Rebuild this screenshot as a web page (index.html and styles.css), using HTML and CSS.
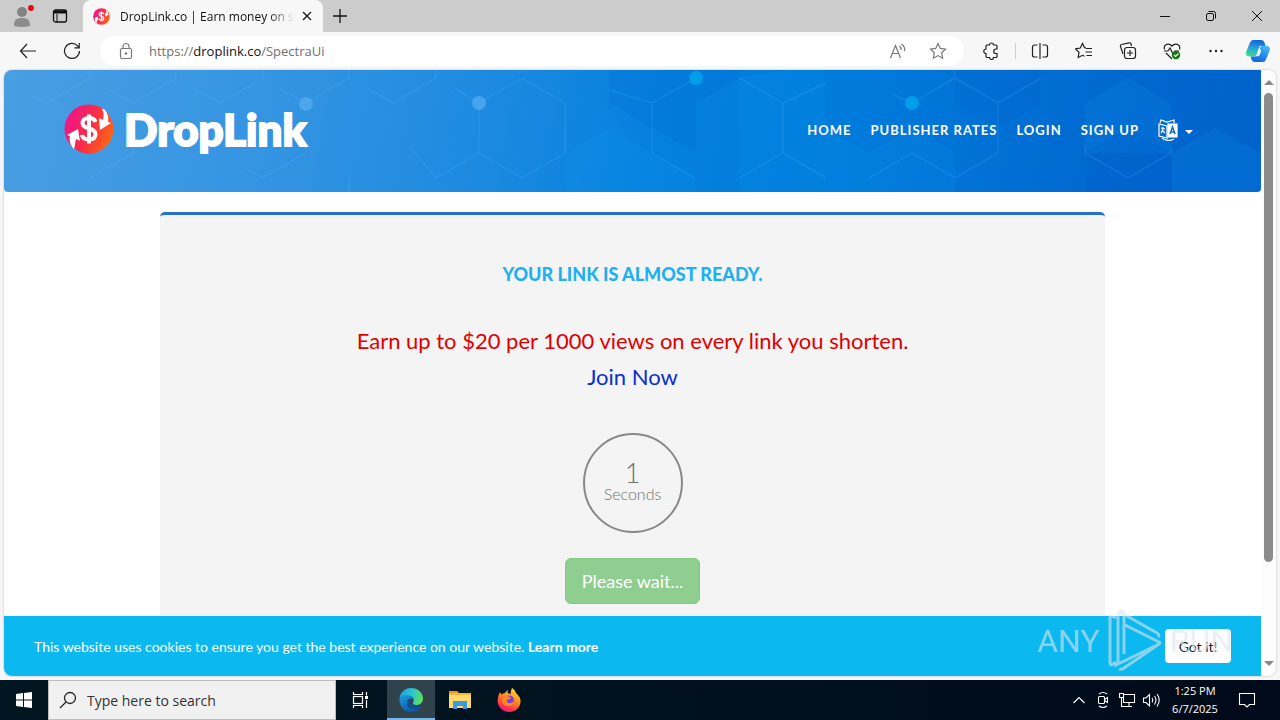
FILE: index.html
```html
<!DOCTYPE html>
<html lang="en">
<head>
  <meta charset="UTF-8" />
  <meta name="viewport" content="width=device-width, initial-scale=1.0" />
  <title>DropLink.co | Earn money on short links</title>
  <link rel="stylesheet" href="styles.css">
</head>
<body>
  <!-- shared logo symbol -->
  <svg class="defs" width="0" height="0" aria-hidden="true">
    <defs>
      <linearGradient id="drop" x1="0" y1="0.3" x2="1" y2="0.7">
        <stop offset="0" stop-color="#f0148c" />
        <stop offset="0.5" stop-color="#fa2c48" />
        <stop offset="1" stop-color="#ff6a10" />
      </linearGradient>
    </defs>
    <symbol id="coin" viewBox="0 0 50 50">
      <circle cx="25" cy="25" r="24.5" fill="url(#drop)" />
      <path d="M31.500 18c-1-3-3.500-4-6.500-4-4 0-6.500 2-6.500 5 0 7 13 4 13 11 0 4-3 5.500-6.500 5.500-4 0-6.500-1.500-7-4.500M25 10.500v29" fill="none" stroke="#fff" stroke-width="4" />
      <path d="M40 5c4 4 5 9 4 13l3 1-11 7-1-12 4 2c1-4 1-7-1-11z" fill="#fff" />
      <path d="M10 45c-4-4-5-9-4-13l-3-1 11-6 2 12-4-2c-1 4-1 7-2 10z" fill="#fff" />
    </symbol>
  </svg>

  <div class="titlebar">
    <button class="tb-btn profile" aria-label="Profile">
      <svg width="24" height="24" viewBox="0 0 24 24"><circle cx="12" cy="8" r="5" fill="#828282" /><path d="M4 22c0-6 2-8 8-8s8 2 8 8q-8 2-16 0z" fill="#8c8c8c" /><circle cx="21" cy="4" r="3" fill="#e00b1c" /></svg>
    </button>
    <button class="tb-btn workspaces" aria-label="Tab actions">
      <svg width="16" height="16" viewBox="0 0 16 16"><rect x="1.500" y="2" width="13" height="12" rx="2" fill="none" stroke="#111" stroke-width="1.300" /><path d="M2 3h12v2H2zM5 6v8" fill="#111" stroke="#111" /></svg>
    </button>
    <div class="tab">
      <svg width="17" height="17"><use href="#coin" /></svg>
      <span class="tab-title">DropLink.co | Earn money on short links</span>
      <button class="tab-close" aria-label="Close tab">
        <svg width="10" height="10" viewBox="0 0 10 10"><path d="M1 1l8 8M9 1l-8 8" stroke="#111" stroke-width="1.200" /></svg>
      </button>
    </div>
    <button class="tb-btn new-tab" aria-label="New tab">
      <svg width="14" height="14" viewBox="0 0 14 14"><path d="M7 0v14M0 7h14" stroke="#111" stroke-width="1.300" /></svg>
    </button>
    <div class="window-controls">
      <button aria-label="Minimize"><svg width="10" height="10" viewBox="0 0 10 10"><path d="M0 5.500h10" stroke="#111" /></svg></button>
      <button aria-label="Restore"><svg width="10" height="10" viewBox="0 0 10 10"><rect x="0.500" y="2.500" width="7" height="7" rx="1.500" fill="none" stroke="#111" /><path d="M2.500 0.500h5a2 2 0 0 1 2 2v5" fill="none" stroke="#111" /></svg></button>
      <button aria-label="Close"><svg width="10" height="10" viewBox="0 0 10 10"><path d="M0 0l10 10M10 0L0 10" stroke="#111" /></svg></button>
    </div>
  </div>

  <div class="toolbar">
    <button aria-label="Back"><svg width="18" height="18" viewBox="0 0 18 18"><path d="M17 9H2M8 2L1.500 9 8 16" /></svg></button>
    <button aria-label="Refresh"><svg width="18" height="18" viewBox="0 0 18 18"><path d="M16.500 9a7.500 7.500 0 1 1-2-5.200L16 5.500M16.200 1v4.800h-4.800" /></svg></button>
    <div class="address">
      <svg width="16" height="18" viewBox="0 0 16 18"><rect x="2.500" y="6.500" width="11" height="10" rx="1.500" /><path d="M5 6.500V4.500a3 3 0 0 1 6 0v2" /><circle cx="8" cy="11.500" r="0.700" /></svg>
      <div class="url">https://<b>droplink.co</b>/SpectraUi</div>
      <button aria-label="Read aloud"><svg width="18" height="18" viewBox="0 0 18 18"><path d="M1.500 16L6.500 3.500 11.500 16M3.500 11.500h6M10.500 4q2 1.500 1.500 4M12.500 2q4 3 3 7" /></svg></button>
      <button aria-label="Add to favorites"><svg width="18" height="18" viewBox="0 0 18 18"><path d="M9 1.500l2.300 4.900 5.200.7-3.800 3.700.9 5.400L9 13.600l-4.600 2.600.9-5.400L1.500 7.100l5.200-.7z" /></svg></button>
    </div>
    <button aria-label="Extensions"><svg width="18" height="18" viewBox="0 0 18 18"><path d="M5 3h2.500a2 2 0 0 1 4 0h2.500q1 0 1 1v3h-1a2 2 0 0 0 0 4.500h1v3q0 1-1 1h-2.500a2 2 0 0 1-4 0H5q-1 0-1-1v-3a2.200 2.200 0 0 1 0-4.500V4q0-1 1-1z" /></svg></button>
    <span class="divider"></span>
    <button aria-label="Split screen"><svg width="18" height="18" viewBox="0 0 18 18"><path d="M6.500 3h-3a2 2 0 0 0-2 2v8a2 2 0 0 0 2 2h3M11.500 3h3a2 2 0 0 1 2 2v8a2 2 0 0 1-2 2h-3M9 1v16" /></svg></button>
    <button aria-label="Favorites"><svg width="18" height="18" viewBox="0 0 18 18"><path d="M11 6L9.500 5.700 7.500 1.500 5.300 6l-4.800.8L4 10.300 3.200 15.500l4.300-2.200 2 1M11 6.500h6M10.500 10h6.500M11.500 13.500H17" /></svg></button>
    <button aria-label="Collections"><svg width="18" height="18" viewBox="0 0 18 18"><path d="M4 12L1.500 4.500q-.5-1.500 1-2L10 .800q1.500-.300 2 1L12.500 4" /><rect x="5.500" y="5.500" width="11" height="11" rx="2.500" /><path d="M11 8v6M8 11h6" /></svg></button>
    <button aria-label="Browser essentials"><svg width="18" height="18" viewBox="0 0 18 18"><path d="M1.500 7.500C0 2 6 .500 9 4c3-3.500 9-2 7.500 3.500M3 11l6 6M1 9h4l2-3 3 6 2-3h4" /><circle cx="13" cy="13" r="4.200" class="ok" /><path d="M11 13l1.500 1.500 3-3" class="tick" /></svg></button>
    <button aria-label="Settings and more"><svg width="18" height="18" viewBox="0 0 18 18"><g class="dots"><circle cx="3.500" cy="9" r="1.200" /><circle cx="9" cy="9" r="1.200" /><circle cx="14.500" cy="9" r="1.200" /></g></svg></button>
    <button class="copilot" aria-label="Copilot">
      <svg width="24" height="24" viewBox="0 0 24 24">
        <defs>
          <linearGradient id="cpA" x1="0.500" y1="0" x2="0.300" y2="1"><stop offset="0" stop-color="#1565d8" /><stop offset="0.500" stop-color="#2aa4dc" /><stop offset="1" stop-color="#3ddc84" /></linearGradient>
          <linearGradient id="cpB" x1="0.700" y1="0" x2="0.300" y2="1"><stop offset="0" stop-color="#42b8f5" /><stop offset="1" stop-color="#1463df" /></linearGradient>
        </defs>
        <path d="M7 1h8q3 0 4 4l.500 2h-4q-2 0-3 3l-1.500 5q-1 2.500-4 2.500H3Q-1 17 .500 12L4 3.500Q5 1 7 1z" fill="url(#cpA)" />
        <path d="M17 23H9q-3 0-4-4l-.300-1.500H8q2 0 3-3L12.500 10q1-3 4-3H21q4 .500 2.500 5L20 20.500Q19 23 17 23z" fill="url(#cpB)" />
        <path d="M13 7h3q-2.500 0-3.500 3L11 14.500q-1 3-3 3 3 0 5.500-1L15 12z" fill="#eef8ff" />
      </svg>
    </button>
  </div>

  <div class="view">
    <div class="page">
      <header>
        <svg class="hexes" viewBox="0 0 1257 122" preserveAspectRatio="xMidYMid slice" aria-hidden="true">
          <g class="fills">
            <path d="M735 8l43-8h43v58l44 25v39H735z" />
            <path d="M865 83l43-25 43 25v39h-86z" />
            <path d="M1081 33l43-25 43 25v50l-86 0z" />
            <path d="M1168 83l43-25 46 25v39h-89z" />
            <path d="M562 83l43-25 87 50v14H562z" />
          </g>
          <g class="shades">
            <path d="M605 0h130v8l-43 25v50l-87-50z" />
            <path d="M951 0h86v33l-43 25-43-25z" />
            <path d="M1081 83l43-25 43 25v39h-86z" />
          </g>
          <g class="lines">
            <path d="M86 0v8L43 33 28 26M172 0v8l-43 25-25-14M259 0v8l-43 25-25-14M345 0v8l-43 25-26-14M302 76v7l-43 25-18-10M432 0v8l-43 25-25-14" />
            <path d="M129 76v7L86 108M345 108v14M405 76l27 32v0M432 108l43-25V33l43-25 43 25v50l-43 25-43-25M475 33L450 18" />
            <path d="M605 20l43 13 44-25M648 33v50l43 25M735 8l44 25 43-20M779 33v50l-44 25M779 83l43 25" />
            <path d="M888 24l20 9 43-25V0M951 8l43 25 43-25M994 33v50l-43 25-43-25M908 83l-43 25M1167 76v7l-43 25-43-25 0-7" />
          </g>
          <circle cx="302" cy="34" r="7" class="dot pale" />
          <circle cx="475" cy="33" r="7" class="dot pale" />
          <circle cx="692" cy="8" r="7" class="dot" />
          <circle cx="908" cy="33" r="7" class="dot" />
        </svg>
        <a class="brand" href="#">
          <svg width="50" height="50" aria-hidden="true"><use href="#coin" /></svg>
          <span>DropLink</span>
        </a>
        <nav>
          <a href="#">Home</a>
          <a href="#">Publisher Rates</a>
          <a href="#">Login</a>
          <a href="#">Sign Up</a>
          <a class="lang" href="#" aria-label="Language">
            <svg width="20" height="22" viewBox="0 0 20 22" fill="none" stroke="#fff" stroke-width="1.200">
              <path d="M1 5l8 2v12l-8-2zM2 4l1-3 6 2 7-2v3" />
              <path d="M10 5h9v13h-9z" fill="#fff" />
              <path d="M3 9l4 1M5 8c0 4-1 5-2 6M4 11l3 3M4 19c3 3 9 3 12 1" />
              <path d="M12 15l2.500-7 2.500 7M13 13h3" stroke="#0a6fd0" stroke-width="1.500" />
            </svg>
            <i class="caret"></i>
          </a>
        </nav>
      </header>

      <main>
        <h1>Your link is almost ready.</h1>
        <p class="promo">Earn up to $20 per 1000 views on every link you shorten.<br><a href="#">Join Now</a></p>
        <div class="timer"><span class="count">1</span><span>Seconds</span></div>
        <button class="wait">Please wait...</button>
      </main>

      <div class="cookies">
        <p>This website uses cookies to ensure you get the best experience on our website. <a href="#">Learn more</a></p>
        <button>Got it!</button>
      </div>

      <div class="watermark" aria-hidden="true">
        <span>ANY</span>
        <svg width="58" height="66" viewBox="0 0 58 66">
          <path d="M10 10L6 8Q4 7 4 9v46q0 3 3 1l3-2M18 46V6q0-4-4-2-2 1-2 4v47M14 4l37 21q3 2 1 4M19 17l34 17q2 1 0 2L8 58M53 36L18 60q-3 2-5 1" />
        </svg>
        <span>RUN</span>
      </div>
    </div>
    <div class="scrollbar">
      <i class="arrow up"></i>
      <i class="thumb"></i>
      <i class="arrow down"></i>
    </div>
  </div>

  <div class="taskbar">
    <button class="start" aria-label="Start">
      <svg width="16" height="16" viewBox="0 0 16 16" fill="#fff"><path d="M0 2l7-1v6.500H0zM8 .900L16 0v7.500H8zM0 8.500h7V15l-7-1zM8 8.500h8V16l-8-1z" /></svg>
    </button>
    <label class="search">
      <svg width="18" height="18" viewBox="0 0 18 18" fill="none" stroke="#222" stroke-width="1.300"><circle cx="11" cy="7" r="5.500" /><path d="M7 11l-6 6" /></svg>
      <input type="text" placeholder="Type here to search" aria-label="Search" />
    </label>
    <button class="task-view" aria-label="Task view">
      <svg width="18" height="18" viewBox="0 0 18 18" fill="none" stroke="#fff" stroke-width="1.200"><rect x="2.500" y="5.500" width="9" height="7" /><path d="M2.500 1v2.500h9V1M2.500 17v-2.500h9V17M15.500 1v3.500M15.500 9v8" /><path d="M14 5h3v3h-3z" fill="#fff" stroke="none" /></svg>
    </button>
    <div class="apps">
      <button class="active" aria-label="Edge">
        <svg width="24" height="24" viewBox="0 0 24 24">
          <defs>
            <linearGradient id="edA" x1="0" y1="0.300" x2="1" y2="0.500"><stop offset="0" stop-color="#1f9fe0" /><stop offset="0.500" stop-color="#2cc3d2" /><stop offset="1" stop-color="#5be05a" /></linearGradient>
            <linearGradient id="edB" x1="0" y1="0" x2="0.500" y2="1"><stop offset="0" stop-color="#1b9de2" /><stop offset="1" stop-color="#0c59a4" /></linearGradient>
          </defs>
          <path d="M.500 11C1 4 6 0 12 0c7 0 12 5 12 10.500 0 4-3 6.500-6.500 6.500-3 0-4-1.500-3.500-2.500 2-3 0-6.500-4-6.500C6 7 2 8 .500 11z" fill="url(#edA)" />
          <path d="M.500 11C2 8 5 6.500 8.500 7c3 .300 5 2 5.500 4-4-1-6 1-6 4 0 5 6 8 13.500 4.500C19 23 15.500 24 12 24 5 24 0 18 .500 11z" fill="url(#edB)" />
          <path d="M8 15c0-2 1-4 3-4.500-1 6 5 9 11 7l-.500 2C15 23 8 20 8 15z" fill="#134e94" />
        </svg>
      </button>
      <button aria-label="File Explorer">
        <svg width="22" height="20" viewBox="0 0 22 20"><path d="M0 1h8l2 2h12v15H0z" fill="#f5b53a" /><path d="M0 5h22v13H0z" fill="#ffd96a" /><path d="M4 19v-8h14v8h-4v-3H8v3z" fill="#3c9ae0" /><path d="M0 1h8v2H0z" fill="#e89c1e" /></svg>
      </button>
      <button aria-label="Firefox">
        <svg width="24" height="24" viewBox="0 0 24 24">
          <defs>
            <linearGradient id="fxA" x1="0.800" y1="0" x2="0.300" y2="1"><stop offset="0" stop-color="#ffe52e" /><stop offset="0.450" stop-color="#ff8a1f" /><stop offset="0.800" stop-color="#ff3550" /><stop offset="1" stop-color="#e31587" /></linearGradient>
          </defs>
          <path d="M3 4l1.500 2.500Q6 5 8 5q1-2 3-3l-.500 3 3 1Q14 2 15 0q3 1.500 4 5l1.500 1.500Q24 10 23.500 14C23 20 18 24 12 24S1 19.500.500 13Q.500 8 3 4z" fill="url(#fxA)" />
          <circle cx="12.500" cy="12" r="4.500" fill="#7b3fe0" />
          <path d="M6 9q3-2 7 0l1 1q-1 1-3 1.500-2 .500-1 2.500 2 2 4 1 2-1 3-.500-2 4-6 3.500-5 0-6-5z" fill="#ff8b22" />
        </svg>
      </button>
    </div>
    <div class="tray">
      <button aria-label="Show hidden icons"><svg width="18" height="18" viewBox="0 0 18 18"><path d="M3.500 12L9 6.500l5.500 5.500" /></svg></button>
      <button aria-label="Meet Now"><svg width="18" height="18" viewBox="0 0 18 18"><rect x="4.500" y="5.500" width="6" height="7" rx="1" /><path d="M10.500 8.500l3-2v5l-3-2M5 3q4-3 8 0M5 15q4 3 8 0" /></svg></button>
      <button aria-label="Network"><svg width="18" height="18" viewBox="0 0 18 18"><path d="M5.500 3.500h11v8h-11zM11 11.500v4M7 15.500h7M1.500 2.500h4v4h-4zM3.500 6.500v9H7" /></svg></button>
      <button aria-label="Volume"><svg width="18" height="18" viewBox="0 0 18 18"><path d="M1.500 7v4.500H4l3.500 3.500V3.500L4 7zM10 7q1.500 2 0 4.500M12.500 5q3 4 0 8.500M15 3q4.500 6 0 12.500" /></svg></button>
      <div class="clock"><span>1:25 PM</span><span>6/7/2025</span></div>
      <button class="notify" aria-label="Notifications"><svg width="18" height="18" viewBox="0 0 18 18"><path d="M1.500 2.500h15v11h-5L9 16l-2.500-2.500h-5z" /></svg></button>
    </div>
  </div>
</body>
</html>
```
FILE: styles.css
```css
* {
  box-sizing: border-box;
}
body {
  margin: 0;
  height: 100vh;
  display: flex;
  flex-direction: column;
  overflow: hidden;
  background: #f7f5f5;
  font-family: 'Open Sans', 'Noto Sans', sans-serif;
  color: #111;
}
button {
  display: flex;
  align-items: center;
  justify-content: center;
  padding: 0;
  border: none;
  background: none;
  color: inherit;
  font: inherit;
}
a {
  color: inherit;
  text-decoration: none;
}
p {
  margin: 0;
}
.defs {
  position: absolute;
}

/* browser tabs */
.titlebar {
  display: flex;
  flex: none;
  height: 32px;
  background: #cccccc;
}
.profile {
  width: 44px;
}
.workspaces {
  width: 32px;
  margin-right: 7px;
}
.tab {
  display: flex;
  align-items: center;
  width: 240px;
  padding: 0 8px 0 10px;
  gap: 10px;
  background: #f7f7f7;
  border-radius: 8px 8px 0 0;
}
.tab svg {
  flex: none;
}
.tab-title {
  flex: 1;
  margin-right: -6px;
  overflow: hidden;
  white-space: nowrap;
  font-size: 12px;
  mask-image: linear-gradient(to right, #000 85%, transparent);
}
.tab-close {
  width: 16px;
  height: 16px;
}
.new-tab {
  width: 34px;
}
.window-controls {
  display: flex;
  margin-left: auto;
}
.window-controls button {
  width: 46px;
}

/* address bar */
.toolbar {
  display: flex;
  flex: none;
  align-items: center;
  height: 38px;
  padding: 0 2px 0 6px;
  background: #f7f7f7;
}
.toolbar button {
  width: 44px;
  height: 30px;
}
.toolbar svg {
  fill: none;
  stroke: #222;
  stroke-width: 1.2;
}
.toolbar .copilot {
  width: 40px;
}
.toolbar .copilot svg {
  stroke: none;
}
.toolbar .ok {
  fill: #107c10;
  stroke: none;
}
.toolbar .tick {
  stroke: #fff;
}
.toolbar .dots {
  fill: #222;
  stroke: none;
}
.toolbar .address {
  display: flex;
  flex: 1;
  align-items: center;
  height: 30px;
  margin: 0 5px 0 6px;
  padding: 0 6px 0 18px;
  background: #fff;
  border-radius: 15px;
}
.toolbar .address svg {
  stroke: #777;
}
.toolbar .address button {
  width: 40px;
}
.url {
  flex: 1;
  margin-left: 15px;
  font-size: 13px;
  color: #707070;
}
.url b {
  font-weight: normal;
  color: #111;
}
.divider {
  width: 1px;
  height: 16px;
  margin: 0 2px;
  background: #cfcfcf;
}

/* web page */
.view {
  display: flex;
  flex: 1;
  min-height: 0;
  margin: 0 4px 4px;
  overflow: hidden;
  background: #fff;
  border-radius: 8px;
  box-shadow: 0 0 2px #aaa;
}
.page {
  position: relative;
  flex: 1;
  overflow: hidden;
  font-family: Lato, sans-serif;
}
header {
  position: relative;
  display: flex;
  align-items: center;
  justify-content: space-between;
  height: 122px;
  padding: 0 68px 4px 60px;
  background: linear-gradient(100deg, #4a9ee2 0%, #3394e2 22%, #1d8ae0 38%, #0480de 52%, #007adb 68%, #0068d0 88%, #0062cb 100%);
  border-radius: 0 0 4px 4px;
  color: #fff;
}
.hexes {
  position: absolute;
  inset: 0;
  width: 100%;
  height: 100%;
}
.fills {
  fill: #14a0f0;
  opacity: 0.12;
}
.shades {
  fill: #0050c0;
  opacity: 0.1;
}
.lines {
  fill: none;
  stroke: #6fc4ff;
  stroke-width: 1.5;
  opacity: 0.15;
}
.dot {
  fill: #00a8ec;
  opacity: 0.8;
}
.dot.pale {
  fill: #5fb4f0;
  opacity: 0.6;
}
.brand,
nav {
  position: relative;
  display: flex;
  align-items: center;
}
.brand {
  gap: 10px;
  font-size: 44px;
  font-weight: 900;
  line-height: 50px;
  -webkit-text-stroke: 2px #fff;
}
nav {
  gap: 19px;
  margin-top: 2px;
  font-size: 13px;
  font-weight: bold;
  letter-spacing: 1px;
  text-transform: uppercase;
}
.lang {
  display: flex;
  align-items: center;
  gap: 7px;
}
.caret {
  margin-top: 3px;
  border: 4px solid transparent;
  border-top-color: #fff;
  border-bottom: none;
}
main {
  display: flex;
  flex-direction: column;
  align-items: center;
  min-height: 600px;
  margin: 20px 156px;
  padding-top: 48px;
  background: #f4f4f4;
  border-top: 3px solid #266fcc;
  border-radius: 5px;
  text-align: center;
}
h1 {
  margin: 0 0 38px;
  font-size: 18px;
  font-weight: 900;
  line-height: 22px;
  text-transform: uppercase;
  color: #1fb0f0;
}
.promo {
  font-size: 22px;
  line-height: 36px;
  color: #e00000;
}
.promo a {
  color: #0a2fd0;
}
.timer {
  display: flex;
  flex-direction: column;
  justify-content: center;
  width: 100px;
  height: 100px;
  margin: 38px 0 25px;
  padding-bottom: 2px;
  border: 2px solid #888;
  border-radius: 50%;
  font-size: 16px;
  font-weight: 300;
  line-height: 18px;
  color: #707070;
}
.count {
  font-size: 27px;
  line-height: 24px;
}
.wait {
  height: 46px;
  padding: 0 16px;
  background: #90cd90;
  border: 1px solid #84c884;
  border-radius: 6px;
  font-size: 18px;
  color: #fff;
}
.cookies {
  position: absolute;
  inset: auto 0 0;
  display: flex;
  align-items: center;
  justify-content: space-between;
  height: 60px;
  padding: 0 30px;
  background: #0cb8f0;
  font-size: 14px;
  color: #fff;
}
.cookies a {
  font-weight: bold;
}
.cookies button {
  width: 66px;
  height: 34px;
  background: #fff;
  border-radius: 4px;
  color: #222;
}
.watermark {
  position: absolute;
  right: 28px;
  bottom: 2px;
  display: flex;
  align-items: center;
  gap: 6px;
  font-family: 'Liberation Sans Narrow', 'Roboto', sans-serif;
  font-size: 32px;
  color: #dde6ec;
  opacity: 0.6;
}
.watermark svg {
  fill: none;
  stroke: #dde6ec;
  stroke-width: 3;
}
.scrollbar {
  display: flex;
  flex-direction: column;
  align-items: center;
  width: 15px;
  padding: 10px 0;
  background: #fcfcfc;
}
.arrow {
  border: 5px solid transparent;
}
.up {
  border-top: none;
  border-bottom-color: #888;
}
.down {
  margin-top: auto;
  border-bottom: none;
  border-top-color: #888;
}
.thumb {
  width: 9px;
  height: 80%;
  margin-top: 8px;
  background: #8b8b8b;
  border-radius: 5px;
}

/* taskbar */
.taskbar {
  display: flex;
  flex: none;
  height: 40px;
  background: linear-gradient(to right, #001620, #00121e 50%, #000a1a);
  color: #fff;
}
.start,
.task-view,
.apps button {
  width: 48px;
}
.search {
  display: flex;
  align-items: center;
  width: 288px;
  padding: 0 10px;
  gap: 10px;
  background: #f1f1f1;
  border: 1px solid #bbb;
}
.search input {
  flex: 1;
  min-width: 0;
  padding: 0;
  border: none;
  background: none;
  font: inherit;
  font-size: 14px;
}
.search input::placeholder {
  color: #333;
}
.apps {
  display: flex;
  gap: 1px;
  margin-left: 3px;
}
.apps .active {
  padding-top: 2px;
  background: #30434c;
  border-bottom: 2px solid #76b9ed;
}
.tray {
  display: flex;
  margin-left: auto;
  padding-right: 13px;
}
.tray button {
  width: 24px;
}
.tray svg {
  fill: none;
  stroke: #fff;
  stroke-width: 1.1;
}
.clock {
  display: flex;
  flex-direction: column;
  justify-content: center;
  width: 64px;
  font-size: 11px;
  line-height: 18px;
  text-align: center;
}
.tray .notify {
  width: 40px;
}
```
